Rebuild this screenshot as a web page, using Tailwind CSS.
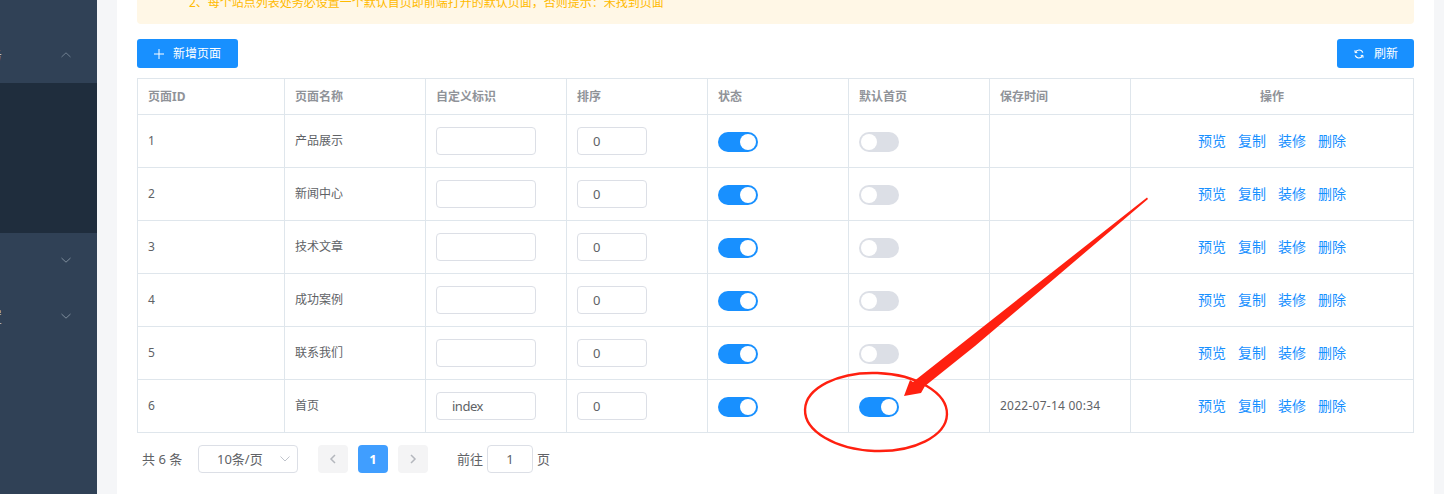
<!DOCTYPE html>
<html lang="zh-CN">
<head>
<meta charset="UTF-8">
<title>页面管理</title>
<script src="https://cdn.jsdelivr.net/npm/@tailwindcss/browser@4"></script>
</head>
<body class="relative flex h-[494px] w-[1444px] overflow-hidden bg-[#f5f6f8] font-['Noto_Sans','Noto_Sans_CJK_SC',sans-serif] text-xs text-[#606266]">

<!-- sidebar -->
<aside class="w-[97px] shrink-0 overflow-hidden bg-[#304156] pt-[27px] text-sm text-[#bfcbd9]">
  <div class="flex h-14 items-center justify-end pr-[25px]">
    <span class="absolute left-[-12px]">务</span>
    <svg class="h-[10px] w-[12px]" viewBox="0 0 12 10" fill="none" stroke="#6f7f90" stroke-width="1"><path d="M1.5 7 6 2.8 10.5 7"/></svg>
  </div>
  <div class="h-[150px] bg-[#1f2d3d]"></div>
  <div class="flex h-14 items-center justify-end pr-[25px]">
    <svg class="h-[10px] w-[12px] -translate-y-px" viewBox="0 0 12 10" fill="none" stroke="#7d8c9b" stroke-width="1"><path d="M1.5 3 6 7.2 10.5 3"/></svg>
  </div>
  <div class="flex h-14 items-center justify-end pr-[25px]">
    <span class="absolute left-[-12px]">置</span>
    <svg class="h-[10px] w-[12px] -translate-y-px" viewBox="0 0 12 10" fill="none" stroke="#7d8c9b" stroke-width="1"><path d="M1.5 3 6 7.2 10.5 3"/></svg>
  </div>
</aside>

<!-- main -->
<main class="ml-5 mr-[10px] w-[1317px] shrink-0 bg-white px-5">
  <div class="flex h-6 items-start rounded-b bg-[#fff7e6] pl-[52px] text-xs leading-none text-[#ffba00]">
    <p class="-mt-[3px]">2、每个站点列表处务必设置一个默认首页即前端打开的默认页面，否则提示：未找到页面</p>
  </div>

  <div class="mt-[15px] flex h-[29px] justify-between">
    <button class="flex w-[101px] items-center rounded-[3px] bg-[#1890ff] pl-[17px] text-white">
      <svg class="mr-[9px] h-[10px] w-[10px]" viewBox="0 0 10 10" fill="none" stroke="white" stroke-width="1"><path d="M5 0v10M0 5h10"/></svg>
      新增页面
    </button>
    <button class="flex w-[77px] items-center rounded-[3px] bg-[#1890ff] pl-[17px] text-white">
      <svg class="mr-[10px] h-[10px] w-[10px]" viewBox="0 0 10 10" fill="none" stroke="white" stroke-width="1.2"><path d="M8.8 3.6A4 4 0 0 0 1.4 3.4M1.2 6.4a4 4 0 0 0 7.4.2"/><path d="M1 1.2v2.4h2.3M9 8.8V6.4H6.7" stroke-width="1"/></svg>
      刷新
    </button>
  </div>

  <table class="mt-[10px] w-[1276px] table-fixed border-collapse">
    <colgroup>
      <col class="w-[147px]"><col class="w-[141px]"><col class="w-[141px]"><col class="w-[141px]"><col class="w-[141px]"><col class="w-[141px]"><col class="w-[141px]"><col class="w-[283px]">
    </colgroup>
    <thead class="text-left font-bold text-[#909399]">
      <tr class="h-9">
        <th class="border border-[#dfe6ec] px-[10px]">页面ID</th>
        <th class="border border-[#dfe6ec] px-[10px]">页面名称</th>
        <th class="border border-[#dfe6ec] px-[10px]">自定义标识</th>
        <th class="border border-[#dfe6ec] px-[10px]">排序</th>
        <th class="border border-[#dfe6ec] px-[10px]">状态</th>
        <th class="border border-[#dfe6ec] px-[10px]">默认首页</th>
        <th class="border border-[#dfe6ec] px-[10px]">保存时间</th>
        <th class="border border-[#dfe6ec] px-[10px] text-center">操作</th>
      </tr>
    </thead>
    <tbody>
      <tr class="h-[53px]">
        <td class="border border-[#dfe6ec] px-[10px]">1</td>
        <td class="border border-[#dfe6ec] px-[10px]">产品展示</td>
        <td class="border border-[#dfe6ec] px-[10px]"><div class="h-7 w-[100px] rounded border border-[#dcdfe6]"></div></td>
        <td class="border border-[#dfe6ec] px-[10px]"><div class="h-7 w-[70px] rounded border border-[#dcdfe6] pl-[15px] text-[13px] leading-[26px]">0</div></td>
        <td class="border border-[#dfe6ec] px-[10px]"><div class="flex h-5 w-10 translate-y-px justify-end rounded-full bg-[#1890ff] p-[2px]"><span class="size-4 rounded-full bg-white"></span></div></td>
        <td class="border border-[#dfe6ec] px-[10px]"><div class="flex h-5 w-10 translate-y-px rounded-full bg-[#dcdfe6] p-[2px]"><span class="size-4 rounded-full bg-white"></span></div></td>
        <td class="border border-[#dfe6ec] px-[10px]"></td>
        <td class="border border-[#dfe6ec] px-[10px]"><div class="flex justify-center gap-3 text-sm text-[#1890ff]"><a>预览</a><a>复制</a><a>装修</a><a>删除</a></div></td>
      </tr>
      <tr class="h-[53px]">
        <td class="border border-[#dfe6ec] px-[10px]">2</td>
        <td class="border border-[#dfe6ec] px-[10px]">新闻中心</td>
        <td class="border border-[#dfe6ec] px-[10px]"><div class="h-7 w-[100px] rounded border border-[#dcdfe6]"></div></td>
        <td class="border border-[#dfe6ec] px-[10px]"><div class="h-7 w-[70px] rounded border border-[#dcdfe6] pl-[15px] text-[13px] leading-[26px]">0</div></td>
        <td class="border border-[#dfe6ec] px-[10px]"><div class="flex h-5 w-10 translate-y-px justify-end rounded-full bg-[#1890ff] p-[2px]"><span class="size-4 rounded-full bg-white"></span></div></td>
        <td class="border border-[#dfe6ec] px-[10px]"><div class="flex h-5 w-10 translate-y-px rounded-full bg-[#dcdfe6] p-[2px]"><span class="size-4 rounded-full bg-white"></span></div></td>
        <td class="border border-[#dfe6ec] px-[10px]"></td>
        <td class="border border-[#dfe6ec] px-[10px]"><div class="flex justify-center gap-3 text-sm text-[#1890ff]"><a>预览</a><a>复制</a><a>装修</a><a>删除</a></div></td>
      </tr>
      <tr class="h-[53px]">
        <td class="border border-[#dfe6ec] px-[10px]">3</td>
        <td class="border border-[#dfe6ec] px-[10px]">技术文章</td>
        <td class="border border-[#dfe6ec] px-[10px]"><div class="h-7 w-[100px] rounded border border-[#dcdfe6]"></div></td>
        <td class="border border-[#dfe6ec] px-[10px]"><div class="h-7 w-[70px] rounded border border-[#dcdfe6] pl-[15px] text-[13px] leading-[26px]">0</div></td>
        <td class="border border-[#dfe6ec] px-[10px]"><div class="flex h-5 w-10 translate-y-px justify-end rounded-full bg-[#1890ff] p-[2px]"><span class="size-4 rounded-full bg-white"></span></div></td>
        <td class="border border-[#dfe6ec] px-[10px]"><div class="flex h-5 w-10 translate-y-px rounded-full bg-[#dcdfe6] p-[2px]"><span class="size-4 rounded-full bg-white"></span></div></td>
        <td class="border border-[#dfe6ec] px-[10px]"></td>
        <td class="border border-[#dfe6ec] px-[10px]"><div class="flex justify-center gap-3 text-sm text-[#1890ff]"><a>预览</a><a>复制</a><a>装修</a><a>删除</a></div></td>
      </tr>
      <tr class="h-[53px]">
        <td class="border border-[#dfe6ec] px-[10px]">4</td>
        <td class="border border-[#dfe6ec] px-[10px]">成功案例</td>
        <td class="border border-[#dfe6ec] px-[10px]"><div class="h-7 w-[100px] rounded border border-[#dcdfe6]"></div></td>
        <td class="border border-[#dfe6ec] px-[10px]"><div class="h-7 w-[70px] rounded border border-[#dcdfe6] pl-[15px] text-[13px] leading-[26px]">0</div></td>
        <td class="border border-[#dfe6ec] px-[10px]"><div class="flex h-5 w-10 translate-y-px justify-end rounded-full bg-[#1890ff] p-[2px]"><span class="size-4 rounded-full bg-white"></span></div></td>
        <td class="border border-[#dfe6ec] px-[10px]"><div class="flex h-5 w-10 translate-y-px rounded-full bg-[#dcdfe6] p-[2px]"><span class="size-4 rounded-full bg-white"></span></div></td>
        <td class="border border-[#dfe6ec] px-[10px]"></td>
        <td class="border border-[#dfe6ec] px-[10px]"><div class="flex justify-center gap-3 text-sm text-[#1890ff]"><a>预览</a><a>复制</a><a>装修</a><a>删除</a></div></td>
      </tr>
      <tr class="h-[53px]">
        <td class="border border-[#dfe6ec] px-[10px]">5</td>
        <td class="border border-[#dfe6ec] px-[10px]">联系我们</td>
        <td class="border border-[#dfe6ec] px-[10px]"><div class="h-7 w-[100px] rounded border border-[#dcdfe6]"></div></td>
        <td class="border border-[#dfe6ec] px-[10px]"><div class="h-7 w-[70px] rounded border border-[#dcdfe6] pl-[15px] text-[13px] leading-[26px]">0</div></td>
        <td class="border border-[#dfe6ec] px-[10px]"><div class="flex h-5 w-10 translate-y-px justify-end rounded-full bg-[#1890ff] p-[2px]"><span class="size-4 rounded-full bg-white"></span></div></td>
        <td class="border border-[#dfe6ec] px-[10px]"><div class="flex h-5 w-10 translate-y-px rounded-full bg-[#dcdfe6] p-[2px]"><span class="size-4 rounded-full bg-white"></span></div></td>
        <td class="border border-[#dfe6ec] px-[10px]"></td>
        <td class="border border-[#dfe6ec] px-[10px]"><div class="flex justify-center gap-3 text-sm text-[#1890ff]"><a>预览</a><a>复制</a><a>装修</a><a>删除</a></div></td>
      </tr>
      <tr class="h-[53px]">
        <td class="border border-[#dfe6ec] px-[10px]">6</td>
        <td class="border border-[#dfe6ec] px-[10px]">首页</td>
        <td class="border border-[#dfe6ec] px-[10px]"><div class="h-7 w-[100px] rounded border border-[#dcdfe6] pl-[15px] text-[13px] leading-[26px] tracking-[-0.5px]">index</div></td>
        <td class="border border-[#dfe6ec] px-[10px]"><div class="h-7 w-[70px] rounded border border-[#dcdfe6] pl-[15px] text-[13px] leading-[26px]">0</div></td>
        <td class="border border-[#dfe6ec] px-[10px]"><div class="flex h-5 w-10 translate-y-px justify-end rounded-full bg-[#1890ff] p-[2px]"><span class="size-4 rounded-full bg-white"></span></div></td>
        <td class="border border-[#dfe6ec] px-[10px]"><div class="flex h-5 w-10 translate-y-px justify-end rounded-full bg-[#1890ff] p-[2px]"><span class="size-4 rounded-full bg-white"></span></div></td>
        <td class="border border-[#dfe6ec] px-[10px] tracking-[0.25px]">2022-07-14 00:34</td>
        <td class="border border-[#dfe6ec] px-[10px]"><div class="flex justify-center gap-3 text-sm text-[#1890ff]"><a>预览</a><a>复制</a><a>装修</a><a>删除</a></div></td>
      </tr>
    </tbody>
  </table>

  <!-- pagination -->
  <div class="mt-3 flex h-7 items-center pl-[5px] text-[13px]">
    <span class="w-[56px] pt-px">共 6 条</span>
    <div class="flex h-7 w-[100px] items-center justify-between rounded border border-[#dcdfe6] pl-[18px] pr-[6px]">
      <span class="pt-px">10条/页</span>
      <svg class="h-[8px] w-[12px]" viewBox="0 0 12 8" fill="none" stroke="#c0c4cc" stroke-width="1"><path d="M1.5 1.5 6 6l4.5-4.5"/></svg>
    </div>
    <div class="ml-5 flex h-7 w-[30px] items-center justify-center rounded-sm bg-[#f4f4f5]">
      <svg class="h-[10px] w-[8px]" viewBox="0 0 8 10" fill="none" stroke="#b4b7bd" stroke-width="1.5"><path d="M6 1 2 5l4 4"/></svg>
    </div>
    <div class="ml-[10px] flex h-7 w-[30px] items-center justify-center rounded-sm bg-[#409eff] pt-px font-bold text-white">1</div>
    <div class="ml-[10px] flex h-7 w-[30px] items-center justify-center rounded-sm bg-[#f4f4f5]">
      <svg class="h-[10px] w-[8px]" viewBox="0 0 8 10" fill="none" stroke="#b4b7bd" stroke-width="1.5"><path d="M2 1l4 4-4 4"/></svg>
    </div>
    <span class="ml-[29px] w-[30px] pt-px">前往</span>
    <div class="flex h-7 w-[46px] items-center justify-center rounded border border-[#dcdfe6] pt-px">1</div>
    <span class="ml-1 pt-px">页</span>
  </div>
</main>

<!-- red annotation drawn over the screenshot -->
<svg class="pointer-events-none absolute left-0 top-0" width="1444" height="494" viewBox="0 0 1444 494">
  <path d="M1147 197.5 1148 199 975 346 925 386 921 393 904 396 910 380 913 382Z" fill="#ff2010"/>
  <ellipse cx="876" cy="412" rx="71" ry="39" fill="none" stroke="#ff2010" stroke-width="2.4" transform="rotate(2 876 412)"/>
</svg>
</body>
</html>
